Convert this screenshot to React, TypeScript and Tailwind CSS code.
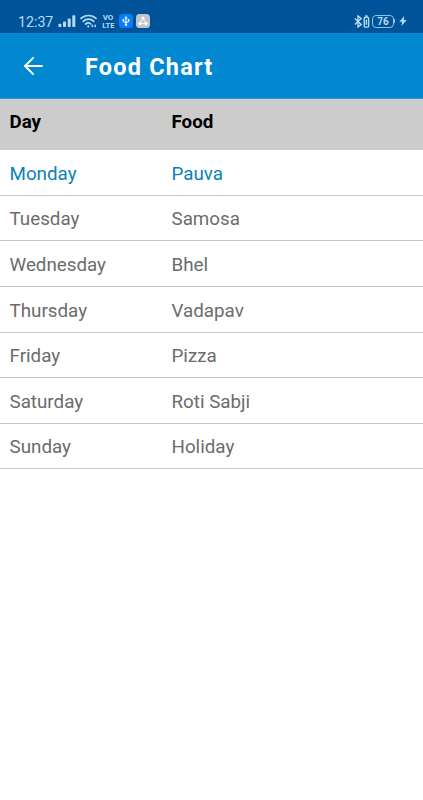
const menu = [
  { day: 'Monday', food: 'Pauva', active: true },
  { day: 'Tuesday', food: 'Samosa' },
  { day: 'Wednesday', food: 'Bhel' },
  { day: 'Thursday', food: 'Vadapav' },
  { day: 'Friday', food: 'Pizza' },
  { day: 'Saturday', food: 'Roti Sabji' },
  { day: 'Sunday', food: 'Holiday' },
];

function SignalIcon() {
  return (
    <svg className="w-[18px] h-[13px]" viewBox="0 0 18 13" fill="currentColor">
      <rect x="0.4" y="8.8" width="3" height="3.2" rx="0.8" />
      <rect x="5" y="6.4" width="3" height="5.6" rx="0.8" />
      <rect x="9.7" y="3.4" width="3" height="8.6" rx="0.8" />
      <rect x="14.3" y="0.3" width="3" height="11.7" rx="0.8" />
    </svg>
  );
}

function WifiIcon() {
  return (
    <svg className="w-[17px] h-[14px]" viewBox="0 0 17 14" fill="none" stroke="currentColor" strokeWidth="1.7" strokeLinecap="round">
      <path d="M1 4.4C5.2.5 11.8.5 16 4.4" />
      <path d="M3.2 7.3c3-2.8 7.6-2.8 10.6 0" />
      <path d="M5.6 10c1.7-1.5 3.6-1.5 5.2 0" />
      <circle cx="8.3" cy="12.4" r="1.1" fill="currentColor" stroke="none" />
      <path d="M12.4 11.4v1M15.2 11.4v1" strokeWidth="1.6" />
    </svg>
  );
}

function UsbBadge() {
  return (
    <svg className="w-[14px] h-[14px]" viewBox="0 0 14 14" fill="none">
      <rect width="14" height="14" rx="3.5" fill="#087cfa" />
      <path d="M7 3v7.5M4.4 5.7v1.7L7 8.9l2.6-1.5V5.7" stroke="#e5f4ff" strokeWidth="1.2" />
      <path d="M5.3 4.4 7 2.1l1.7 2.3z" fill="#e5f4ff" />
      <circle cx="7" cy="10.7" r="1.3" fill="#e5f4ff" />
      <circle cx="4.4" cy="6" r="1" fill="#e5f4ff" />
      <circle cx="9.6" cy="6" r="1" fill="#e5f4ff" />
    </svg>
  );
}

function ShareBadge() {
  return (
    <svg className="w-[14px] h-[14px]" viewBox="0 0 14 14" fill="none">
      <rect width="14" height="14" rx="3.5" fill="#c0c4cf" />
      <path d="M7 4.2 4 9.6h6z" stroke="#f8fbff" strokeWidth="1" />
      <circle cx="7" cy="4.1" r="1.6" fill="#fff" />
      <circle cx="3.9" cy="9.6" r="1.6" fill="#fff" />
      <circle cx="10.1" cy="9.6" r="1.6" fill="#fff" />
    </svg>
  );
}

function BluetoothIcon() {
  return (
    <svg className="w-[16px] h-[13px]" viewBox="0 0 16 13" fill="none" stroke="currentColor" strokeWidth="1.4">
      <path d="m.8 3.4 6.4 6-3.2 2.6V1l3.2 2.6-6.4 6" />
      <rect x="10.2" y="2.2" width="4.4" height="9.9" rx="1.2" />
      <path d="M11.2 1h2.4M12.4 4.4v5.4" />
    </svg>
  );
}

function StatusBar() {
  return (
    <div className="flex h-[33px] items-center bg-[#005398] pl-[18px] pr-[16px] pt-[9px] text-[#b4dcfa]">
      <span className="w-[40px] pt-[2px] text-[14.2px] leading-none whitespace-nowrap">12:37</span>
      <SignalIcon />
      <span className="ml-[4px]"><WifiIcon /></span>
      <span className="ml-[4px] flex w-[14px] flex-col items-center pt-px text-[8px] font-bold leading-[8px]">
        <span>VO</span>
        <span className="scale-x-[0.95]">LTE</span>
      </span>
      <div className="ml-[4px] flex gap-[3px]">
        <UsbBadge />
        <ShareBadge />
      </div>
      <div className="ml-auto flex items-center">
        <BluetoothIcon />
        <span className="ml-[2px] flex h-[13px] w-[22px] items-center justify-center rounded-[4px] border border-[#8fc2e8] pt-px text-[10px] font-bold leading-none">
          76
        </span>
        <span className="h-[4px] w-px bg-[#8fc2e8]" />
        <svg className="ml-[4px] h-[10px] w-[8px]" viewBox="0 0 8 10" fill="currentColor">
          <path d="M5.2 0 .3 5.8h2.8L2.5 10l5.2-6H4.8z" />
        </svg>
      </div>
    </div>
  );
}

export default function App() {
  return (
    <div className="h-[800px] w-[423px] overflow-hidden bg-white font-['Roboto',sans-serif]">
      <StatusBar />
      <header className="flex h-[66px] items-center border-b border-[#3f94c5] bg-[#0288d1] pl-[23px] pt-[2px] text-white">
        <svg className="-mt-px h-[20px] w-[21px]" viewBox="0 0 21 20" fill="none" stroke="currentColor" strokeWidth="2">
          <path d="M19.6 10H2.2M10.6 1.4 2 10l8.6 8.6" />
        </svg>
        <h1 className="ml-[41px] pt-[2px] text-[23.5px] font-bold tracking-[1.2px] leading-none">Food Chart</h1>
      </header>

      <div className="flex h-[51.4px] bg-[#cccccc] pl-[9.5px] pt-[12px] text-[18.8px] font-bold leading-[22px] text-black">
        <span className="w-[162px]">Day</span>
        <span>Food</span>
      </div>
      {menu.map((item) => (
        <div
          key={item.day}
          className={`flex h-[45.55px] items-center border-b border-[#c6c6c6] pl-[9.5px] pt-[2.5px] text-[18.8px] leading-[22px] ${
            item.active ? 'text-[#0b7fba]' : 'text-[#6c6c6c]'
          }`}
        >
          <span className="w-[162px]">{item.day}</span>
          <span>{item.food}</span>
        </div>
      ))}
    </div>
  );
}
